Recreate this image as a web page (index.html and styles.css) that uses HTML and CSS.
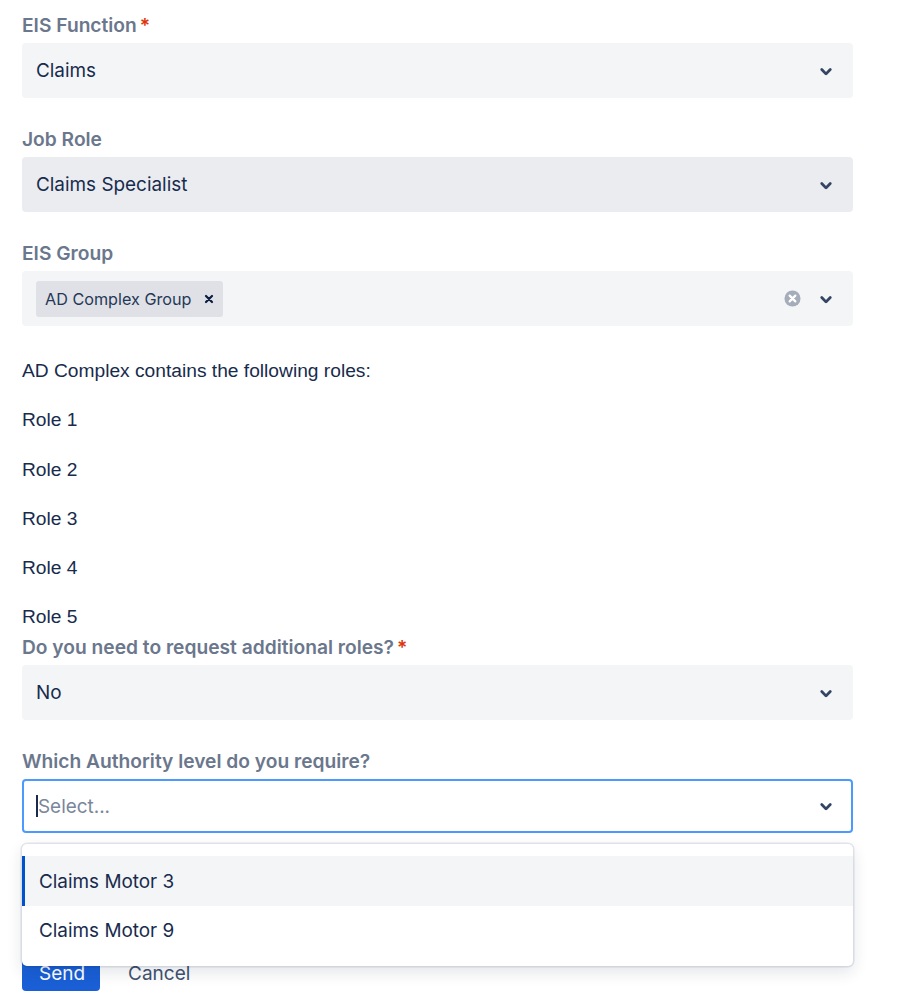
FILE: index.html
```html
<!DOCTYPE html>
<html>
<head>
<meta charset="utf-8">
<link rel="stylesheet" href="styles.css">
</head>
<body>
<div class="form">
  <div class="group">
    <div class="label">EIS Function<span class="req">*</span></div>
    <div class="field">
      <span class="value">Claims</span>
      <span class="icons"><svg class="chev" viewBox="0 0 24 24"><path d="M8.292 10.293a1.009 1.009 0 000 1.419l2.939 2.965c.218.215.5.322.779.322s.556-.107.769-.322l2.93-2.955a1.01 1.01 0 000-1.419.987.987 0 00-1.406 0l-2.298 2.317-2.307-2.327a.99.99 0 00-1.406 0z"/></svg></span>
    </div>
  </div>
  <div class="group">
    <div class="label">Job Role</div>
    <div class="field hover">
      <span class="value">Claims Specialist</span>
      <span class="icons"><svg class="chev" viewBox="0 0 24 24"><path d="M8.292 10.293a1.009 1.009 0 000 1.419l2.939 2.965c.218.215.5.322.779.322s.556-.107.769-.322l2.93-2.955a1.01 1.01 0 000-1.419.987.987 0 00-1.406 0l-2.298 2.317-2.307-2.327a.99.99 0 00-1.406 0z"/></svg></span>
    </div>
  </div>
  <div class="group">
    <div class="label">EIS Group</div>
    <div class="field multi">
      <span class="tag">AD Complex Group<svg class="tagx" viewBox="0 0 10 10"><path d="M2 2L8 8M8 2L2 8"/></svg></span>
      <span class="icons">
        <svg class="clear" viewBox="0 0 18 18"><circle cx="9" cy="9" r="8.5"/><path d="M6 6L12 12M12 6L6 12"/></svg>
        <svg class="chev" viewBox="0 0 24 24"><path d="M8.292 10.293a1.009 1.009 0 000 1.419l2.939 2.965c.218.215.5.322.779.322s.556-.107.769-.322l2.93-2.955a1.01 1.01 0 000-1.419.987.987 0 00-1.406 0l-2.298 2.317-2.307-2.327a.99.99 0 00-1.406 0z"/></svg>
      </span>
    </div>
  </div>
  <div class="desc">
    <p>AD Complex contains the following roles:</p>
    <p>Role 1</p>
    <p>Role 2</p>
    <p>Role 3</p>
    <p>Role 4</p>
    <p>Role 5</p>
  </div>
  <div class="group tight">
    <div class="label">Do you need to request additional roles?<span class="req">*</span></div>
    <div class="field">
      <span class="value">No</span>
      <span class="icons"><svg class="chev" viewBox="0 0 24 24"><path d="M8.292 10.293a1.009 1.009 0 000 1.419l2.939 2.965c.218.215.5.322.779.322s.556-.107.769-.322l2.93-2.955a1.01 1.01 0 000-1.419.987.987 0 00-1.406 0l-2.298 2.317-2.307-2.327a.99.99 0 00-1.406 0z"/></svg></span>
    </div>
  </div>
  <div class="group select-wrap">
    <div class="label">Which Authority level do you require?</div>
    <div class="field focus">
      <span class="value placeholder"><span class="caret"></span>Select...</span>
      <span class="icons"><svg class="chev" viewBox="0 0 24 24"><path d="M8.292 10.293a1.009 1.009 0 000 1.419l2.939 2.965c.218.215.5.322.779.322s.556-.107.769-.322l2.93-2.955a1.01 1.01 0 000-1.419.987.987 0 00-1.406 0l-2.298 2.317-2.307-2.327a.99.99 0 00-1.406 0z"/></svg></span>
    </div>
    <div class="menu">
      <div class="option active">Claims Motor 3</div>
      <div class="option">Claims Motor 9</div>
    </div>
  </div>
  <div class="buttons">
    <button class="btn primary">Send</button>
    <button class="btn subtle">Cancel</button>
  </div>
</div>
</body>
</html>
```
FILE: styles.css
```css
* { box-sizing: border-box; }
html, body { margin: 0; padding: 0; background: #fff; }
body { font-family: "Inter", "Roboto", sans-serif; color: #172B4D; }
.form { width: 831px; margin-left: 22px; padding-top: 14px; padding-bottom: 9px; }
.group { margin-bottom: 30px; }
.group.tight { margin-top: 5px; }
.label {
  font-size: 19.2px; font-weight: 600; color: #6B778C;
  line-height: 22px; margin-bottom: 7px;
}
.req { color: #DE350B; margin-left: 3px; }
.field {
  height: 55px; background: #F4F5F7; border-radius: 4px;
  display: flex; align-items: center; justify-content: space-between;
  padding: 0 8px 0 12px; border: 2px solid #F4F5F7;
}
.field.hover { background: #EBECF0; border-color: #EBECF0; }
.field.focus { background: #fff; border-color: #4C9AFF; padding-left: 12px; height: 54px; }
.value { font-size: 18.9px; color: #172B4D; display: flex; align-items: center; }
.placeholder { color: #7A869A; }
.caret { display: inline-block; width: 1.5px; height: 22px; background: #172B4D; margin-right: 0.5px; }
.icons { display: flex; align-items: center; gap: 0; }
.chev { width: 34px; height: 34px; fill: #344563; }
.clear { width: 17px; height: 17px; margin-right: 8px; }
.clear circle { fill: #A5ADBA; }
.clear path { stroke: #fff; stroke-width: 2.4; stroke-linecap: round; }
.field.multi { padding-left: 12px; }
.tag {
  display: flex; align-items: center; height: 36px; background: #DFE1E6;
  border-radius: 3px; padding: 0 9px 0 9px; font-size: 16.2px; color: #253858;
}
.tagx { width: 10px; height: 10px; margin-left: 12px; }
.tagx path { stroke: #091E42; stroke-width: 2.2; stroke-linecap: round; }
.desc { font-family: "Liberation Sans", Arial, sans-serif; font-size: 19.2px; color: #172B4D; padding-top: 1px; }
.desc p { margin: 0 0 21.3px 0; line-height: 28px; }
.desc p:last-child { margin-bottom: 0; }
.select-wrap { position: relative; }
.menu {
  position: absolute; left: 0; right: 0; top: 94px;
  background: #fff; border-radius: 5px; padding: 12px 0 11px 0;
  box-shadow: 0 0 0 1.5px rgba(9,30,66,0.1), 0 6px 16px rgba(9,30,66,0.12);
  z-index: 5;
}
.option {
  height: 49.5px; display: flex; align-items: center; padding-left: 17px;
  font-size: 18.9px; color: #172B4D;
}
.option.active { background: #F4F5F7; box-shadow: inset 3px 0 0 #0052CC; }
.buttons { display: flex; gap: 6px; margin-top: 123px; }
.btn {
  font-family: "Inter", "Roboto", sans-serif; font-size: 19px; border: none;
  height: 35px; border-radius: 4px; padding: 0 17px; cursor: pointer;
}
.primary { background: #1A5FD6; color: #fff; width: 78px; }
.subtle { background: transparent; color: #42526E; padding: 0 22px; }
```
